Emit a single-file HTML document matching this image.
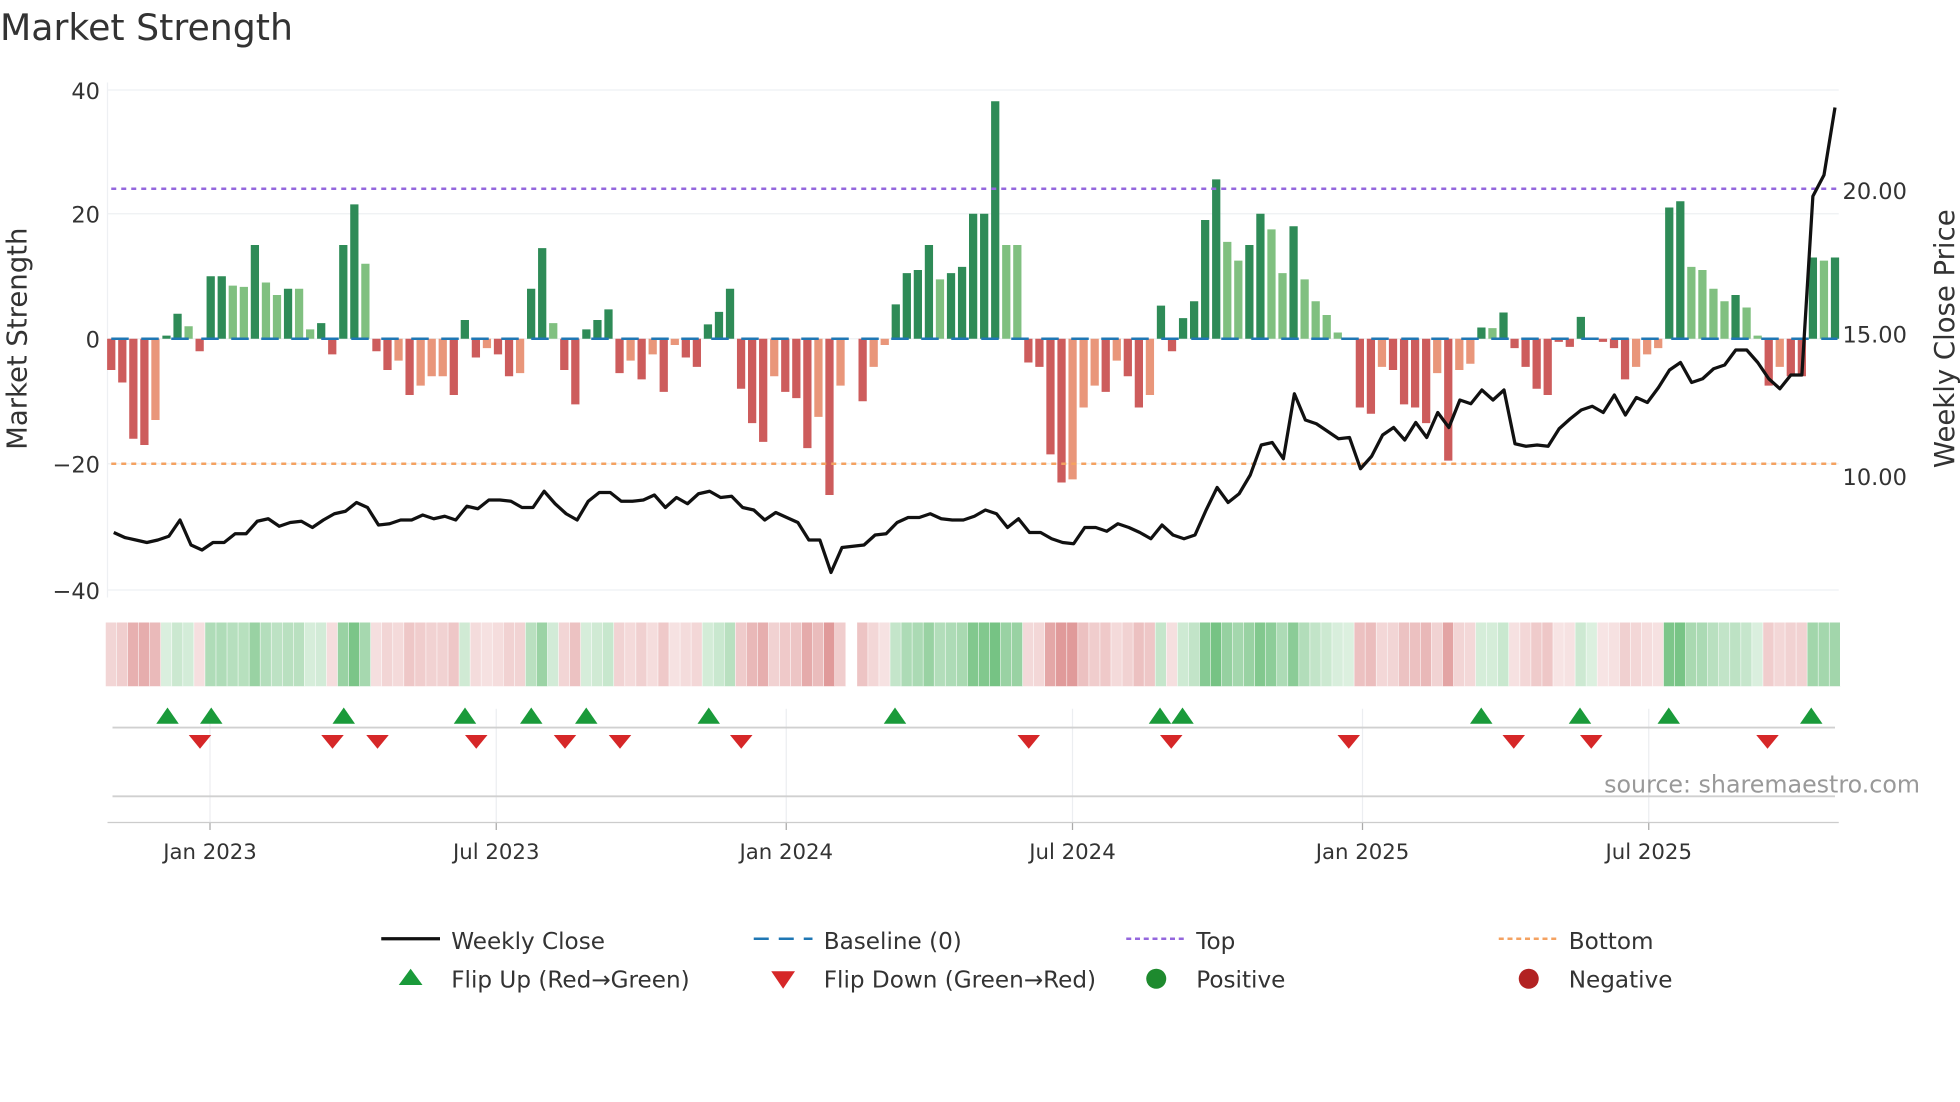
<!DOCTYPE html>
<html><head><meta charset="utf-8"><style>
html,body{margin:0;padding:0;background:#fff;width:1960px;height:1102px;overflow:hidden}
svg{display:block}
text{font-family:"DejaVu Sans","Liberation Sans",sans-serif;fill:#333}
</style></head><body>
<svg id="s" width="1960" height="1102" viewBox="0 0 1568 881.6" xmlns="http://www.w3.org/2000/svg">
<text x="0" y="32" font-size="29">Market Strength</text>
<g stroke="#eef0f3" stroke-width="1">
<line x1="86" y1="72" x2="1471" y2="72"/><line x1="86" y1="171" x2="1471" y2="171"/>
<line x1="86" y1="271" x2="1471" y2="271"/><line x1="86" y1="371" x2="1471" y2="371"/>
<line x1="86" y1="472" x2="1471" y2="472"/><line x1="86" y1="66" x2="86" y2="478"/>
</g>
<g font-size="18" text-anchor="end">
<text x="80" y="79">40</text><text x="80" y="178">20</text><text x="80" y="278">0</text>
<text x="80" y="378">−20</text><text x="80" y="479">−40</text>
</g>
<g font-size="18">
<text x="1474" y="159">20.00</text><text x="1474" y="274">15.00</text><text x="1474" y="388">10.00</text>
</g>
<text transform="translate(21,271) rotate(-90)" font-size="22" text-anchor="middle">Market Strength</text>
<text transform="translate(1563,271) rotate(-90)" font-size="22" text-anchor="middle">Weekly Close Price</text>
<g id="bars"></g>
<line x1="89" y1="271" x2="1470" y2="271" stroke="#1f77b4" stroke-width="2" stroke-dasharray="14 10"/>
<line x1="89" y1="151" x2="1470" y2="151" stroke="#9467dd" stroke-width="2" stroke-dasharray="4 4"/>
<line x1="89" y1="371" x2="1470" y2="371" stroke="#f4a261" stroke-width="2" stroke-dasharray="4 4"/>
<polyline id="price" fill="none" stroke="#111" stroke-width="2.6" stroke-linejoin="round"/>
<g id="strip"></g>
<g stroke="#eceef1" stroke-width="1" id="vg"></g>
<line x1="90" y1="582" x2="1468" y2="582" stroke="#d0d0d0" stroke-width="1.5"/>
<line x1="90" y1="637" x2="1468" y2="637" stroke="#d0d0d0" stroke-width="1.5"/>
<line x1="86" y1="658" x2="1471" y2="658" stroke="#ccc" stroke-width="1"/>
<g id="marks"></g>
<text x="1536" y="634" font-size="19" text-anchor="end" style="fill:#999">source: sharemaestro.com</text>
<g font-size="17" text-anchor="middle" id="xl"></g>
<g font-size="18.5">
<line x1="305" y1="751" x2="352" y2="751" stroke="#111" stroke-width="2.6"/><text x="361" y="759">Weekly Close</text>
<line x1="603" y1="751" x2="650" y2="751" stroke="#1f77b4" stroke-width="2" stroke-dasharray="12 8"/><text x="659" y="759">Baseline (0)</text>
<line x1="901" y1="751" x2="948" y2="751" stroke="#9467dd" stroke-width="2" stroke-dasharray="4 3"/><text x="957" y="759">Top</text>
<line x1="1199" y1="751" x2="1246" y2="751" stroke="#f4a261" stroke-width="2" stroke-dasharray="4 3"/><text x="1255" y="759">Bottom</text>
<polygon points="319,788 338,788 328.5,775" fill="#1a9a3a"/><text x="361" y="790">Flip Up (Red→Green)</text>
<polygon points="617,777 636,777 626.5,791" fill="#d62728"/><text x="659" y="790">Flip Down (Green→Red)</text>
<circle cx="925" cy="783" r="8" fill="#1e8a2e"/><text x="957" y="790">Positive</text>
<circle cx="1223" cy="783" r="8" fill="#b22222"/><text x="1255" y="790">Negative</text>
</g>
</svg>
<script>
var NS="http://www.w3.org/2000/svg";
function el(t,a,p){var e=document.createElementNS(NS,t);for(var k in a)e.setAttribute(k,a[k]);document.getElementById(p).appendChild(e);return e;}
var V="-5d -7d -16d -17d -13l 0.5d 4d 2l -2d 10d 10d 8.5l 8.3l 15d 9l 7l 8d 8l 1.5l 2.5d -2.5d 15d 21.5d 12l -2d -5d -3.5l -9d -7.5l -6l -6l -9d 3d -3d -1.5l -2.5d -6d -5.5l 8d 14.5d 2.5l -5d -10.5d 1.5d 3d 4.7d -5.5d -3.5l -6.5d -2.5l -8.5d -1l -3d -4.5d 2.3d 4.3d 8d -8d -13.5d -16.5d -6l -8.5d -9.5d -17.5d -12.5l -25d -7.5l x -10d -4.5l -1l 5.5d 10.5d 11d 15d 9.5l 10.5d 11.5d 20d 20d 38d 15l 15l -3.8d -4.5d -18.5d -23d -22.5l -11l -7.5l -8.5d -3.5l -6d -11d -9l 5.3d -2d 3.3d 6d 19d 25.5d 15.5l 12.5l 15d 20d 17.5l 10.5l 18d 9.5l 6l 3.8l 1l 0.2l -11d -12d -4.5l -5d -10.5d -11d -13.5d -5.5l -19.5d -5l -4l 1.8d 1.7l 4.2d -1.5d -4.5d -8d -9d -0.5d -1.3d 3.5d 0.2d -0.5d -1.5d -6.5d -4.5l -2.5l -1.5l 21d 22d 11.5l 11l 8l 6l 7d 5l 0.5l -7.5d -4.5l -6d -6d 13d 12.5l 13d".split(" ");
var n=V.length,x0=89,dx=(1468-89)/(n-1);
for(var i=0;i<n;i++){var s=V[i];var x=x0+i*dx;if(s=="x")continue;var v=parseFloat(s),c=s.slice(-1);
 var col=v>=0?(c=="d"?"#2e8b57":"#80c080"):(c=="d"?"#cd5c5c":"#e9967a");
 var h=Math.abs(v)*5;el("rect",{x:x-3.3,y:v>=0?271-h:271,width:6.6,height:Math.max(h,0.8),fill:col},"bars");
 var a=Math.min(1,0.25+Math.abs(v)/30);
 var sc=v>=0?"rgba(60,170,80,"+(a*0.7)+")":"rgba(205,92,92,"+(a*0.62)+")";
 el("rect",{x:x-4.4,y:498,width:8.86,height:51,fill:sc},"strip");
 el("line",{x1:x+4.4,y1:498,x2:x+4.4,y2:549,stroke:"#fff","stroke-width":0.8},"strip");}
var P="426 430 432 434 432 429 416 436 440 434 434 427 427 417 415 421 418 417 422 416 411 409 402 406 420 419 416 416 412 415 413 416 405 407 400 400 401 406 406 393 403 411 416 401 394 394 401 401 400 396 406 398 403 395 393 398 397 406 408 416 410 414 418 432 432 458 438 437 436 428 427 418 414 414 411 415 416 416 413 408 411 422 415 426 426 431 434 435 422 422 425 419 422 426 431 420 428 431 428 408 390 402 395 380 356 354 367 315 336 339 345 351 350 375 365 348 342 352 338 350 330 342 320 323 312 320 312 355 357 356 357 343 335 328 325 330 316 332 318 322 310 296 290 306 303 295 292 280 280 290 303 311 300 300 157 140 86".split(" ");
var pts=[],m=P.length,pd=(1468-91)/(m-1);
for(var j=0;j<m;j++)pts.push((91+j*pd).toFixed(1)+","+P[j]);
document.getElementById("price").setAttribute("points",pts.join(" "));
var U=[134,169,275,372,425,469,567,716,928,946,1185,1264,1335,1449],D=[160,266,302,381,452,496,593,823,937,1079,1211,1273,1414];
U.forEach(function(x){el("polygon",{points:(x-9)+",579 "+(x+9)+",579 "+x+",566",fill:"#1a9a3a"},"marks");});
D.forEach(function(x){el("polygon",{points:(x-9)+",588 "+(x+9)+",588 "+x+",599",fill:"#d62728"},"marks");});
[[168,"Jan 2023"],[397,"Jul 2023"],[629,"Jan 2024"],[858,"Jul 2024"],[1090,"Jan 2025"],[1319,"Jul 2025"]].forEach(function(t){
 el("line",{x1:t[0],y1:567,x2:t[0],y2:658},"vg");
 el("line",{x1:t[0],y1:658,x2:t[0],y2:664,stroke:"#aaa"},"vg");
 var e=el("text",{x:t[0],y:687},"xl");e.textContent=t[1];});
</script>
</body></html>
